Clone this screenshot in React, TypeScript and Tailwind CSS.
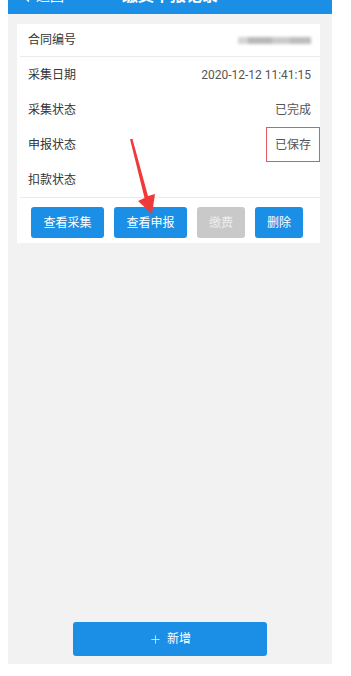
import { Plus, ChevronLeft } from 'lucide-react';

const rows = [
  { label: '采集日期', value: '2020-12-12 11:41:15' },
  { label: '采集状态', value: '已完成' },
  { label: '申报状态', value: '已保存', marked: true },
  { label: '扣款状态', value: '' },
];

const actions = [
  { text: '查看采集', width: 'w-[73px]', disabled: false },
  { text: '查看申报', width: 'w-[73px]', disabled: false },
  { text: '缴费', width: 'w-[48px]', disabled: true },
  { text: '删除', width: 'w-[48px]', disabled: false },
];

export default function App() {
  return (
    <div
      className="relative h-[676px] w-[351px] bg-white"
      style={{ fontFamily: 'Roboto, "Noto Sans CJK SC", sans-serif' }}
    >
      <div className="ml-[8px] flex h-[664px] w-[324px] flex-col bg-[#f2f2f2]">
        {/* Header, mostly scrolled off */}
        <div className="h-[14px] shrink-0 overflow-hidden bg-[#1b8fe6]">
          <div className="relative -mt-[26px] flex h-[44px] items-center text-white">
            <ChevronLeft className="ml-[8px] h-[20px] w-[20px]" strokeWidth={2} />
            <span className="text-[14px]">返回</span>
            <span className="absolute left-0 right-0 text-center text-[16px] font-bold">缴费申报记录</span>
          </div>
        </div>

        {/* Record card */}
        <div className="mt-[10px] ml-[9px] w-[303px] bg-white">
          <div className="flex h-[32px] items-center justify-between pl-[11px] pr-[9px]">
            <span className="text-[12px] text-[#333]">合同编号</span>
            <div className="flex h-[7px] w-[73px] blur-[1.5px]">
              <span className="w-[10px] bg-[#d4d4d4]" />
              <span className="w-[24px] bg-[#b8b8b8]" />
              <span className="w-[18px] bg-[#cacaca]" />
              <span className="w-[21px] bg-[#bdbdbd]" />
            </div>
          </div>
          <div className="ml-[3px] h-px bg-[#ebebeb]" />
          {rows.map((row) => (
            <div key={row.label} className="relative flex h-[35px] items-center justify-between pl-[11px] pr-[9px]">
              <span className="text-[12px] text-[#333]">{row.label}</span>
              <span className="text-[12px] text-[#555]">{row.value}</span>
              {row.marked && (
                <div className="absolute right-0 top-0 h-[35px] w-[54px] border border-[#e25a60]" />
              )}
            </div>
          ))}
          <div className="ml-[3px] h-px bg-[#ebebeb]" />
          <div className="flex gap-[10px] pl-[14px] pt-[9px] pb-[5px]">
            {actions.map((a) => (
              <button
                key={a.text}
                className={`${a.width} h-[31px] rounded-[3px] text-[12px] ${
                  a.disabled ? 'bg-[#c9c9c9] text-[#ececec]' : 'bg-[#1b8fe6] text-white'
                }`}
              >
                {a.text}
              </button>
            ))}
          </div>
        </div>

        <div className="flex-1" />

        <button className="mx-auto mb-[8px] flex h-[34px] w-[194px] items-center justify-center gap-[5px] rounded-[3px] bg-[#1b8fe6] text-[12px] text-white">
          <Plus className="h-[13px] w-[13px]" strokeWidth={1.3} />
          新增
        </button>
      </div>

      {/* Red annotation arrow */}
      <svg className="pointer-events-none absolute left-0 top-0" width="351" height="676" viewBox="0 0 351 676">
        <polygon points="130,139 132.5,139 148,196 155,194 152,214 138,201 144.5,198" fill="#f03a3a" />
      </svg>
    </div>
  );
}
